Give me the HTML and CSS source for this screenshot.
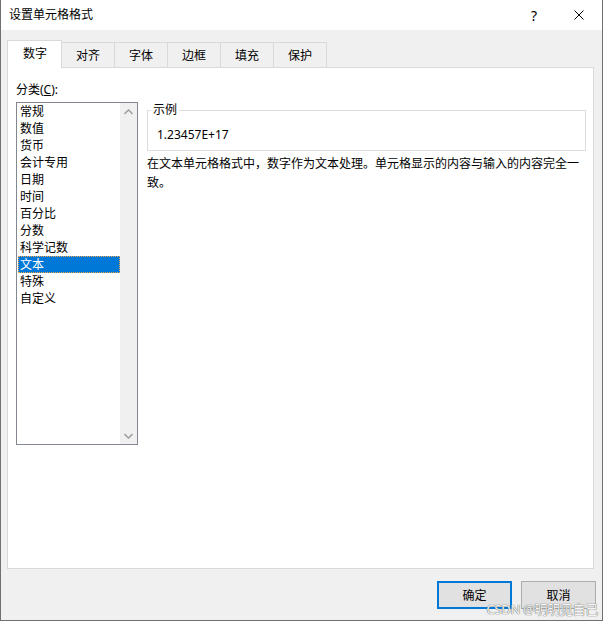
FILE: index.html
```html
<!DOCTYPE html>
<html lang="zh-CN">
<head>
<meta charset="utf-8">
<title>设置单元格格式</title>
<link rel="stylesheet" href="styles.css">
</head>
<body>
<div class="window">
  <div class="titlebar">
    <span class="title">设置单元格格式</span>
    <div class="caption-btns">
      <span class="cap-btn help">?</span>
      <span class="cap-btn close">
        <svg width="10" height="10" viewBox="0 0 10 10"><path d="M0.5 0.5 L9.5 9.5 M9.5 0.5 L0.5 9.5" stroke="#000" stroke-width="1" fill="none"/></svg>
      </span>
    </div>
  </div>
  <div class="client">
    <div class="tabs">
      <div class="tab active">数字</div>
      <div class="tab">对齐</div>
      <div class="tab">字体</div>
      <div class="tab">边框</div>
      <div class="tab">填充</div>
      <div class="tab last">保护</div>
    </div>
    <div class="panel">
      <div class="left-col">
        <div class="label">分类(<u>C</u>):</div>
        <div class="listbox">
          <ul class="items">
            <li>常规</li>
            <li>数值</li>
            <li>货币</li>
            <li>会计专用</li>
            <li>日期</li>
            <li>时间</li>
            <li>百分比</li>
            <li>分数</li>
            <li>科学记数</li>
            <li class="selected">文本</li>
            <li>特殊</li>
            <li>自定义</li>
          </ul>
          <div class="scrollbar">
            <span class="arrow"><svg width="9" height="6" viewBox="0 0 9 6"><path d="M0.5 5 L4.5 1 L8.5 5" stroke="#a3a3a3" stroke-width="1.6" fill="none"/></svg></span>
            <span class="arrow"><svg width="9" height="6" viewBox="0 0 9 6"><path d="M0.5 1 L4.5 5 L8.5 1" stroke="#a3a3a3" stroke-width="1.6" fill="none"/></svg></span>
          </div>
        </div>
      </div>
      <div class="right-col">
        <fieldset class="sample">
          <legend>示例</legend>
          <div class="sample-value">1.23457E+17</div>
        </fieldset>
        <p class="desc">在文本单元格格式中，数字作为文本处理。单元格显示的内容与输入的内容完全一致。</p>
      </div>
    </div>
    <div class="buttons">
      <button class="btn default">确定</button>
      <button class="btn">取消</button>
    </div>
  </div>
  <div class="watermark">CSDN @明明见自己</div>
</div>
</body>
</html>
```

FILE: styles.css
```css
* { box-sizing: border-box; }
html, body {
  margin: 0;
  padding: 0;
  background: #ffffff;
}
body {
  font-family: "Noto Sans", "Noto Sans CJK SC", sans-serif;
  font-size: 12px;
  color: #000;
}
.window {
  position: relative;
  width: 603px;
  height: 621px;
  border-left: 1px solid #707070;
  border-right: 1px solid #707070;
  border-bottom: 1px solid #707070;
  display: flex;
  flex-direction: column;
  background: #f0f0f0;
}
.titlebar {
  height: 30px;
  background: #ffffff;
  display: flex;
  align-items: center;
  justify-content: space-between;
  flex: none;
}
.title {
  padding-left: 8px;
  font-size: 12px;
  line-height: 30px;
}
.caption-btns {
  display: flex;
  height: 30px;
}
.cap-btn {
  width: 46px;
  height: 30px;
  display: flex;
  align-items: center;
  justify-content: center;
}
.help {
  font-size: 14px;
  font-family: "Noto Sans", sans-serif;
  padding-left: 2px;
}
.close svg { display: block; }
.client {
  flex: 1;
  display: flex;
  flex-direction: column;
  padding: 10px 8px 11px 6px;
}
.tabs {
  position: relative;
  z-index: 1;
  display: flex;
  align-items: flex-end;
  height: 28px;
  margin-bottom: -1px;
}
.tab {
  height: 26px;
  padding: 4px 14px 0;
  border: 1px solid #d9d9d9;
  border-right: none;
  background: #f0f0f0;
  line-height: 18px;
  white-space: nowrap;
}
.tab.last { border-right: 1px solid #d9d9d9; }
.tab.active {
  height: 28px;
  padding: 4px 15px 0;
  background: #ffffff;
  border: 1px solid #d9d9d9;
  border-bottom: none;
  width: 55px;
}
.tab.active + .tab { border-left: none; }
.panel {
  height: 502px;
  background: #ffffff;
  border: 1px solid #d9d9d9;
  display: flex;
  align-items: flex-start;
  padding: 14px 7px 0 8px;
}
.left-col {
  flex: none;
  width: 122px;
}
.label {
  line-height: 16px;
  height: 16px;
  margin-bottom: 4px;
}
.label u { text-decoration: underline; }
.listbox {
  width: 122px;
  height: 343px;
  border: 1px solid #828790;
  display: flex;
}
.items {
  list-style: none;
  margin: 0;
  padding: 0 0 0 1px;
  flex: 1;
}
.items li {
  height: 17px;
  line-height: 17px;
  padding-left: 2px;
  white-space: nowrap;
}
.items li.selected {
  background: #0078d7;
  color: #ffffff;
  border: 1px dotted #f0a848;
  padding-left: 1px;
  line-height: 15px;
}
.scrollbar {
  width: 17px;
  background: #f0f0f0;
  display: flex;
  flex-direction: column;
  justify-content: space-between;
}
.arrow {
  height: 17px;
  display: flex;
  align-items: center;
  justify-content: center;
}
.arrow svg { display: block; }
.right-col {
  flex: 1;
  margin-left: 9px;
  padding-top: 20px;
}
.sample {
  margin: 0;
  border: 1px solid #dcdcdc;
  padding: 0 8px 7px 3px;
  min-width: 0;
}
.sample legend {
  padding: 0 2px;
  line-height: 16px;
  font-size: 12px;
}
.sample-value {
  padding: 9px 0 0 6px;
  line-height: 16px;
}
.desc {
  margin: 3px 0 0;
  line-height: 19px;
}
.buttons {
  margin-top: 12px;
  display: flex;
  justify-content: flex-end;
  gap: 9px;
  padding-right: 0;
  margin-right: -2px;
}
.btn {
  width: 75px;
  height: 28px;
  background: #e1e1e1;
  border: 1px solid #adadad;
  font-family: "Noto Sans", "Noto Sans CJK SC", sans-serif;
  font-size: 12px;
  color: #000;
  padding: 0;
  margin: 0;
}
.btn.default {
  border: 2px solid #0078d7;
}
.watermark {
  position: absolute;
  right: 4px;
  bottom: 3px;
  font-size: 13px;
  line-height: 16px;
  color: #f4f4f4;
  text-shadow: 0 0 1px #6a6a6a, 0 0 1px #6a6a6a;
  white-space: nowrap;
  letter-spacing: -0.3px;
}
```
